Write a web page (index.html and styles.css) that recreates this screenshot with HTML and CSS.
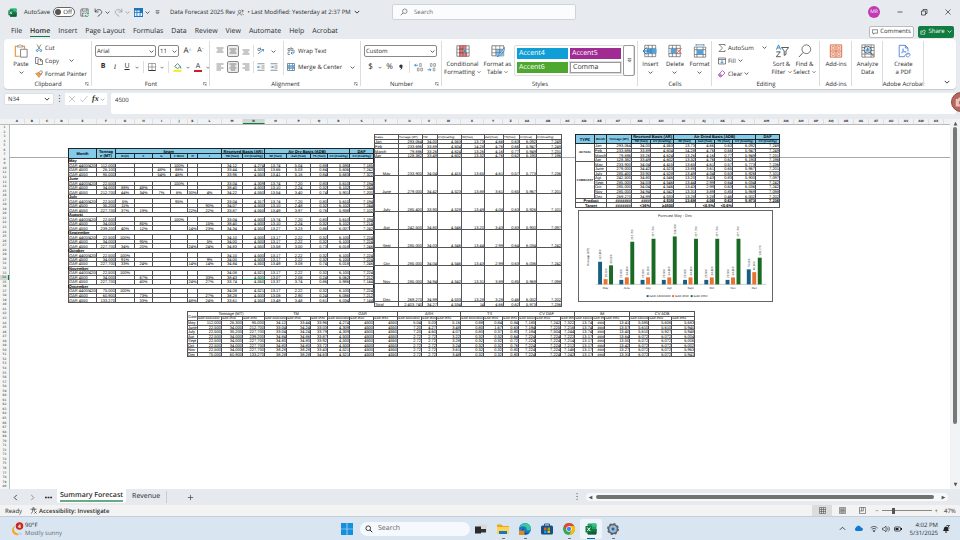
FILE: index.html
```html
<!DOCTYPE html>
<html lang="en">
<head>
<meta charset="utf-8">
<title>Data Forecast 2025 Rev - Excel</title>
<link rel="stylesheet" href="styles.css">
</head>
<body>
<svg class="defs" aria-hidden="true">
  <symbol id="chev" viewBox="0 0 8 8"><path d="M1 2.5 4 5.5 7 2.5" fill="none" stroke="currentColor" stroke-width="1.2"/></symbol>
  <symbol id="launch" viewBox="0 0 10 10"><path d="M1 8V1h8M3.500 3.500 8 8M8 4v4H4" fill="none" stroke="#444" stroke-width="1.200"/></symbol>
  <symbol id="xl" viewBox="0 0 24 24"><rect x="5" y="1" width="18" height="22" rx="2" fill="#21a366"/><path d="M14 1h7a2 2 0 0 1 2 2v4h-9z" fill="#33c481"/><path d="M5 12h18v9a2 2 0 0 1-2 2H7a2 2 0 0 1-2-2z" fill="#185c37"/><path d="M14 12h9v5h-9z" fill="#107c41"/><rect x="1" y="6" width="13" height="13" rx="1" fill="#107c41"/><path d="m4.500 9 6 7m0-7-6 7" stroke="#fff" stroke-width="2"/></symbol>
  <symbol id="search" viewBox="0 0 16 16"><circle cx="9.500" cy="6.500" r="4.500" fill="none" stroke="currentColor" stroke-width="1.300"/><path d="m6 10-4.500 4.500" stroke="currentColor" stroke-width="1.500"/></symbol>
  <symbol id="finder" viewBox="0 0 16 16"><circle cx="6.500" cy="6.500" r="4.700" fill="none" stroke="#222" stroke-width="1.700"/><path d="m10 10 4.500 4.500" stroke="#222" stroke-width="2"/></symbol>
  <symbol id="al-l" viewBox="0 0 16 16"><path d="M1 2h14M1 6h9M1 10h14M1 14h9" stroke="#555" stroke-width="1.300"/></symbol>
  <symbol id="al-c" viewBox="0 0 16 16"><path d="M1 2h14M3.500 6h9M1 10h14M3.500 14h9" stroke="#444" stroke-width="1.300"/></symbol>
  <symbol id="al-r" viewBox="0 0 16 16"><path d="M1 2h14M6 6h9M1 10h14M6 14h9" stroke="#555" stroke-width="1.300"/></symbol>
  <symbol id="v-t" viewBox="0 0 16 16"><path d="M1 2h14M3 6h10M1 10h14" stroke="#555" stroke-width="1.300"/></symbol>
  <symbol id="v-m" viewBox="0 0 16 16"><path d="M1 4h14M3 8h10M1 12h14" stroke="#444" stroke-width="1.300"/></symbol>
  <symbol id="v-b" viewBox="0 0 16 16"><path d="M1 6h14M3 10h10M1 14h14" stroke="#555" stroke-width="1.300"/></symbol>
  <symbol id="in-l" viewBox="0 0 16 16"><path d="M1 1.500h14M9 6h6M9 10h6M1 14.500h14" stroke="#555" stroke-width="1.300"/><path d="M7 8H1m2.500-2.500L1 8l2.500 2.500" fill="none" stroke="#1e7fc2" stroke-width="1.400"/></symbol>
  <symbol id="in-r" viewBox="0 0 16 16"><path d="M1 1.500h14M9 6h6M9 10h6M1 14.500h14" stroke="#555" stroke-width="1.300"/><path d="M1 8h6M4.500 5.500 7 8l-2.500 2.500" fill="none" stroke="#1e7fc2" stroke-width="1.400"/></symbol>
  <symbol id="grid" viewBox="0 0 16 16"><path d="M1 1h14v14H1zM1 5.700h14M1 10.300h14M5.700 1v14M10.300 1v14" fill="none" stroke="#444" stroke-width="1.200"/></symbol>
</svg>

<header class="titlebar">
  <div class="quick">
    <svg class="i9"><use href="#xl"/></svg>
    <label class="autosave">AutoSave <input type="checkbox" aria-label="AutoSave"><span class="toggle"><i></i>Off</span></label>
    <button class="save" aria-label="Save"><svg class="i9" viewBox="0 0 16 16"><path d="M14.500 8V1.500H3L1.500 3v11.500H7M4 1.500v4h8v-4M4.500 14.500V9H8" fill="none" stroke="#555" stroke-width="1.200"/><path d="M9 11a3 3 0 0 1 5.500-1m.500-2v2.500h-2.500M15 13a3 3 0 0 1-5.500 1M9 16v-2.500h2.500" fill="none" stroke="#21a052" stroke-width="1.400"/></svg></button>
    <button aria-label="Undo"><svg class="i9" viewBox="0 0 16 16"><path d="M2 1v6h6M2 7c3-5 8-5 10.500-2.500S14 10 6.500 15" fill="none" stroke="#444" stroke-width="1.500"/></svg></button>
    <svg class="i5"><use href="#chev"/></svg>
    <button class="faded" aria-label="Redo"><svg class="i9" viewBox="0 0 16 16"><path d="M14 1v6H8M14 7C11 2 6 2 3.500 4.500S2 10 9.500 15" fill="none" stroke="#444" stroke-width="1.500"/></svg></button>
    <svg class="i5 faded"><use href="#chev"/></svg>
    <button aria-label="Table"><svg class="i9" viewBox="0 0 16 16"><path d="M0 0h16v16H0z" fill="#1b75bb"/><path d="M1.500 4.500h3v3h-3zM6 4.500h4v3H6zM1.500 9h3v5h-3zM6 9h4v5H6zM11.500 9h3v5h-3z" fill="#e8f3fb"/></svg></button>
    <svg class="i5"><use href="#chev"/></svg>
    <svg class="custom i5" viewBox="0 0 8 8"><path d="M1 1h6M1.500 3.500 4 6.500l2.500-3z" fill="none" stroke="#444"/></svg>
    <span class="doc">Data Forecast 2025 Rev</span>
    <svg class="i7" viewBox="0 0 16 16"><circle cx="6" cy="6" r="3" fill="none" stroke="#444" stroke-width="1.300"/><path d="M1 15c0-6 9-6 9 0M10 2c4 0 4 5 1 6M12 10l3 4M12 4h4" fill="none" stroke="#444" stroke-width="1.300"/></svg>
    <span class="modified">• Last Modified: Yesterday at 2:37 PM</span>
    <svg class="i6"><use href="#chev"/></svg>
  </div>
  <label class="searchbox"><svg class="i8"><use href="#search"/></svg><input type="text" placeholder="Search" aria-label="Search"></label>
  <div class="window">
    <span class="avatar">MR</span>
    <button aria-label="Minimize"><svg class="i8" viewBox="0 0 16 16"><path d="M3 8h10" stroke="#333" stroke-width="1.500"/></svg></button>
    <button aria-label="Restore"><svg class="i8" viewBox="0 0 16 16"><path d="M3 6h8v8H3zM6 6V3h8v8h-3" fill="none" stroke="#333" stroke-width="1.500"/></svg></button>
    <button aria-label="Close"><svg class="i8" viewBox="0 0 16 16"><path d="m3 3 10 10M13 3 3 13" stroke="#333" stroke-width="1.400"/></svg></button>
  </div>
</header>

<nav class="menu">
  <a href="#file">File</a><a href="#home" class="on">Home</a><a href="#insert">Insert</a><a href="#page">Page Layout</a><a href="#formulas">Formulas</a><a href="#data">Data</a><a href="#review">Review</a><a href="#view">View</a><a href="#automate">Automate</a><a href="#help">Help</a><a href="#acrobat">Acrobat</a>
  <button class="comments"><svg class="i6" viewBox="0 0 16 16"><path d="M1 2h14v9H7l-3 3v-3H1z" fill="none" stroke="#333" stroke-width="1.500"/></svg>Comments</button>
  <button class="share"><svg class="i6" viewBox="0 0 16 16"><path d="M7 5H2v9h11v-4M5 10c0-4 3-5 6-5V2l4 4-4 4V8" fill="none" stroke="#fff" stroke-width="1.500"/></svg>Share<svg class="i5"><use href="#chev"/></svg></button>
</nav>

<section class="ribbon" aria-label="Home ribbon">
  <div class="group g-clip">
    <div class="body">
      <button class="big"><svg class="i16" viewBox="0 0 32 32"><path d="M10 5H3v23h10" fill="none" stroke="#e8912d" stroke-width="2.500"/><path d="M18 5h6v6" fill="none" stroke="#e8912d" stroke-width="2.500"/><path d="M8 7V4h3c0-3 6-3 6 0h3v3z" fill="#fff" stroke="#777" stroke-width="1.500"/><path d="M15 12h15v18H15z" fill="#fff" stroke="#666" stroke-width="1.800"/></svg>Paste<svg class="i5"><use href="#chev"/></svg></button>
      <div class="list">
        <button><svg class="i8" viewBox="0 0 16 16"><path d="m4 1 6 10M12 1 6 11" stroke="#555" stroke-width="1.300"/><circle cx="4.500" cy="13" r="2" fill="none" stroke="#1e7fc2" stroke-width="1.500"/><circle cx="11.500" cy="13" r="2" fill="none" stroke="#1e7fc2" stroke-width="1.500"/></svg>Cut</button>
        <button><svg class="i8" viewBox="0 0 16 16"><path d="M6 13H1V1h6M6 4h6l3 3v8H6zM11 4v4h4" fill="none" stroke="#555" stroke-width="1.400"/></svg>Copy<svg class="i5 far"><use href="#chev"/></svg></button>
        <button><svg class="i8" viewBox="0 0 16 16"><path d="m1 7 7 8 4-6-4-4z" fill="#f2a24c" stroke="#c96a1b"/><path d="m8 5 4 4 3-5-3-3z" fill="#fff" stroke="#555" stroke-width="1.400"/></svg>Format Painter</button>
      </div>
    </div>
    <h2>Clipboard</h2><svg class="corner"><use href="#launch"/></svg>
  </div>

  <div class="group g-font">
    <div class="body stack">
      <div class="line">
        <span class="combo c-font"><select aria-label="Font"><option>Arial</option></select><svg class="i5"><use href="#chev"/></svg></span>
        <span class="combo c-size"><select aria-label="Font size"><option>11</option></select><svg class="i5"><use href="#chev"/></svg></span>
        <button class="fa">A<sup>^</sup></button><button class="fa small">A<sup>ˇ</sup></button>
      </div>
      <div class="line fontrow">
        <button class="b">B</button><button class="it">I</button><button class="u">U</button><svg class="i5"><use href="#chev"/></svg><i class="sep"></i>
        <button aria-label="Borders"><svg class="i8" viewBox="0 0 16 16"><path d="M1 1h14v14H1zM1 8h14M8 1v14" fill="none" stroke="#777" stroke-width="1.300"/><path d="M1 15h14" stroke="#333" stroke-width="2"/></svg></button><svg class="i5"><use href="#chev"/></svg><i class="sep"></i>
        <button aria-label="Fill colour"><svg class="i9" viewBox="0 0 16 16"><path d="m3 6 5-5 5 5-5 4zM13 6l1 4" fill="#fff" stroke="#1f7a5c" stroke-width="1.400"/><path d="M1 12h14v4H1z" fill="#f7ec2e"/></svg></button><svg class="i5"><use href="#chev"/></svg>
        <button aria-label="Font colour" class="fcol">A</button><svg class="i5"><use href="#chev"/></svg>
      </div>
    </div>
    <h2>Font</h2><svg class="corner"><use href="#launch"/></svg>
  </div>

  <div class="group g-align">
    <div class="body">
      <div class="alignset">
        <button aria-label="Top align"><svg class="i8"><use href="#v-t"/></svg></button><button class="sel" aria-label="Middle align"><svg class="i8"><use href="#v-m"/></svg></button><button aria-label="Bottom align"><svg class="i8"><use href="#v-b"/></svg></button>
        <button class="bar" aria-label="Orientation"><svg class="i8" viewBox="0 0 16 16"><path d="m2 14 11-9m0 0h-4m4 0v4" fill="none" stroke="#1e7fc2" stroke-width="1.500"/><circle cx="4" cy="5" r="2.500" fill="none" stroke="#555" stroke-width="1.300"/><path d="M7 1v5" stroke="#555" stroke-width="1.300"/></svg></button><svg class="i5"><use href="#chev"/></svg>
        <button aria-label="Align left"><svg class="i8"><use href="#al-l"/></svg></button><button class="sel" aria-label="Centre"><svg class="i8"><use href="#al-c"/></svg></button><button aria-label="Align right"><svg class="i8"><use href="#al-r"/></svg></button>
        <button class="bar" aria-label="Decrease indent"><svg class="i8"><use href="#in-l"/></svg></button><button aria-label="Increase indent"><svg class="i8"><use href="#in-r"/></svg></button>
      </div>
      <div class="wraps">
        <button><svg class="i8" viewBox="0 0 16 16"><path d="M2 3h4v4H2zM8 0v7h4V3H8M6 10H2v5h4" fill="none" stroke="#555" stroke-width="1.200"/><path d="M14 6v6H8m2.500-2.500L8 12l2.500 2.500" fill="none" stroke="#1e7fc2" stroke-width="1.500"/></svg>Wrap Text</button>
        <button><svg class="i8" viewBox="0 0 16 16"><path d="M1 1h14v14H1z" fill="#fff" stroke="#555" stroke-width="1.300"/><path d="M1 5h14v6H1z" fill="#a9d5f2" stroke="#1e7fc2"/><path d="M3 8h10M5 6 3 8l2 2M11 6l2 2-2 2M5 1v4M11 1v4M5 11v4M11 11v4" fill="none" stroke="#14588c"/></svg>Merge &amp; Center<svg class="i5 far"><use href="#chev"/></svg></button>
      </div>
    </div>
    <h2>Alignment</h2><svg class="corner"><use href="#launch"/></svg>
  </div>

  <div class="group g-num">
    <div class="body stack">
      <div class="line"><span class="combo c-num"><select aria-label="Number format"><option>Custom</option></select><svg class="i5"><use href="#chev"/></svg></span></div>
      <div class="line numrow">
        <button class="sym">$</button><svg class="i5"><use href="#chev"/></svg><button class="sym">%</button><button aria-label="Comma style"><svg class="i8" viewBox="0 0 16 16"><path d="M8 3a3 3 0 0 1 3 4c0 3-2 6-5 7 2-2 2-3 2-4a3 3 0 0 1 0-7z" fill="#333"/></svg></button><i class="sep"></i>
        <button aria-label="Increase decimal"><svg class="i9" viewBox="0 0 16 16"><path d="M7 4H1m2.500-2.500L1 4l2.500 2.500" fill="none" stroke="#1e7fc2" stroke-width="1.400"/><path d="M10 1h3v5h-3zM6 9h3v5H6zM12 9h3v5h-3z" fill="none" stroke="#666"/></svg></button>
        <button aria-label="Decrease decimal"><svg class="i9" viewBox="0 0 16 16"><path d="M1 12h6M4.500 9.500 7 12l-2.500 2.500" fill="none" stroke="#1e7fc2" stroke-width="1.400"/><path d="M6 1h3v5H6zM12 1h3v5h-3zM11 9h3v5h-3z" fill="none" stroke="#666"/></svg></button>
      </div>
    </div>
    <h2>Number</h2><svg class="corner"><use href="#launch"/></svg>
  </div>

  <div class="group g-style">
    <div class="body">
      <button class="big"><svg class="i16" viewBox="0 0 32 32"><path d="M2 4h28v24H2z" fill="#fff" stroke="#555" stroke-width="1.600"/><path d="M8 4h14v7H8zM8 11h8v9H8zM8 20h17v8H8z" fill="#f07a7a" stroke="#c33"/><path d="M2 12h28M2 20h28M9 4v24M16 4v24M23 4v24" stroke="#555" stroke-width="1.200"/><path d="M17 13h6v6h-6z" fill="#3b8fd0"/></svg>Conditional<span>Formatting <svg class="i4"><use href="#chev"/></svg></span></button>
      <button class="big"><svg class="i16" viewBox="0 0 32 32"><path d="M2 4h27v23H2z" fill="#fff" stroke="#555" stroke-width="1.600"/><path d="M11 12h18v15H11z" fill="#8cc4ee"/><path d="M2 12h27M2 20h27M11 4v23M20 4v23" stroke="#555" stroke-width="1.300"/><path d="m31 8-12 15-5 6 7-3L32 12z" fill="#d7ebfa" stroke="#1b75bb" stroke-width="1.700"/></svg>Format as<span>Table <svg class="i4"><use href="#chev"/></svg></span></button>
      <div class="gallery">
        <button class="a4">Accent4</button><button class="a5">Accent5</button><button class="a6">Accent6</button><button class="cm">Comma</button>
        <button class="more" aria-label="More styles"><svg class="i5" viewBox="0 0 8 8"><path d="M1 1h6M1.500 3.500 4 6.500l2.500-3z" fill="none" stroke="#444"/></svg></button>
      </div>
    </div>
    <h2>Styles</h2>
  </div>

  <div class="group g-cells">
    <div class="body even">
      <button class="big"><svg class="i16" viewBox="0 0 32 32"><path d="M4 3h25v26H4zM4 10h25M4 22h25M12 3v26M21 3v26" fill="none" stroke="#555" stroke-width="1.500"/><path d="M8 11h23v10H8z" fill="#4da3df"/><path d="M8 8 0 16l8 8M0 16h14M18 11v10" stroke="#1b75bb" stroke-width="2" fill="none"/></svg>Insert<svg class="i5"><use href="#chev"/></svg></button>
      <button class="big"><svg class="i16" viewBox="0 0 32 32"><path d="M2 3h26v26H2zM2 10h26M2 22h26M10 3v26M19 3v26" fill="none" stroke="#555" stroke-width="1.500"/><path d="M6 11h13v10H6z" fill="#4da3df"/><path d="m18 10 13 13M31 10 18 23" stroke="#e0474c" stroke-width="2"/></svg>Delete<svg class="i5"><use href="#chev"/></svg></button>
      <button class="big"><svg class="i16" viewBox="0 0 32 32"><path d="M3 7h26v23H3zM3 13h26M3 24h26M9 7v23M23 7v23" fill="none" stroke="#555" stroke-width="1.500"/><path d="M9 13h14v11H9z" fill="#4da3df"/><path d="M7 2h18M7 0v4M25 0v4" stroke="#1b75bb" stroke-width="1.600"/></svg>Format<svg class="i5"><use href="#chev"/></svg></button>
    </div>
    <h2>Cells</h2>
  </div>

  <div class="group g-edit">
    <div class="body">
      <div class="list">
        <button><svg class="i8" viewBox="0 0 16 16"><path d="M14 4V1H2l7 7-7 7h12v-3" fill="none" stroke="#444" stroke-width="1.300"/></svg>AutoSum<svg class="i5 far"><use href="#chev"/></svg></button>
        <button><svg class="i8" viewBox="0 0 16 16"><path d="M1 2h14v12H1zM1 5h14" fill="none" stroke="#555" stroke-width="1.400"/><path d="M8 6v6M5 9.500 8 12.500l3-3" fill="none" stroke="#1e7fc2" stroke-width="1.600"/></svg>Fill<svg class="i5"><use href="#chev"/></svg></button>
        <button><svg class="i8" viewBox="0 0 16 16"><path d="m1 9 8-8 5 5-8 8H4l-3-3z" fill="#fff" stroke="#a33fb5" stroke-width="1.500"/><path d="m1 9 3-3 5 5-3 3H4l-3-3z" fill="#c77bd4"/></svg>Clear<svg class="i5"><use href="#chev"/></svg></button>
      </div>
      <button class="big"><svg class="i16" viewBox="0 0 32 32"><path d="M3 13 8 2l5 11M5 9h6" fill="none" stroke="#1e7fc2" stroke-width="2"/><path d="M3 18h9L3 29h10" fill="none" stroke="#444" stroke-width="2"/><path d="M15 8h16l-6 8v8l-4 2V16z" fill="none" stroke="#444" stroke-width="2"/></svg>Sort &amp;<span>Filter <svg class="i4"><use href="#chev"/></svg></span></button>
      <button class="big"><svg class="i16" viewBox="0 0 32 32"><circle cx="19" cy="12" r="10" fill="none" stroke="#555" stroke-width="1.800"/><path d="M12 19 2 30" stroke="#555" stroke-width="2"/></svg>Find &amp;<span>Select <svg class="i4"><use href="#chev"/></svg></span></button>
    </div>
    <h2>Editing</h2>
  </div>

  <div class="group g-add">
    <div class="body even"><button class="big"><svg class="i16" viewBox="0 0 32 32"><path d="M3 2h26v28H3zM16 2v28M3 16h26" fill="#fbe3da" stroke="#d8663c" stroke-width="2"/><path d="M7 6h5v6H7zM20 6h5v6h-5zM7 20h5v6H7zM20 20h5v6h-5z" fill="#fff" stroke="#d8663c" stroke-width="1.500"/></svg>Add-ins</button></div>
    <h2>Add-ins</h2>
  </div>
  <div class="group g-ana">
    <div class="body even"><button class="big"><svg class="i16" viewBox="0 0 32 32"><path d="M2 2h28v28H2zM2 8h28M2 15h28M2 23h28M9 2v28M23 2v28" fill="none" stroke="#555" stroke-width="1.500"/><circle cx="15" cy="13" r="8" fill="#d9ecf8" stroke="#444" stroke-width="1.700"/><path d="M12 17v-5M15 17V8M18 17v-7" stroke="#1e7fc2" stroke-width="2"/><path d="m21 19 8 9" stroke="#444" stroke-width="2"/></svg>Analyze<span>Data</span></button></div>
  </div>
  <div class="group g-pdf">
    <div class="body even"><button class="big"><svg class="i16" viewBox="0 0 32 32"><path d="M16 29H5V3h14l6 6v8M19 3v6h6" fill="none" stroke="#4a7fdc" stroke-width="2"/><path d="M10 20c5-3 5-8 4-9s-2 2 1 5 6 3 6 2-6-1-11 2z" fill="none" stroke="#4a7fdc" stroke-width="1.500"/><path d="M17 30c0-6 9-12 12-8s-3 9-7 7 1-9 6-6" fill="none" stroke="#4a7fdc" stroke-width="1.800"/></svg>Create<span>a PDF</span></button></div>
    <h2>Adobe Acrobat</h2>
  </div>
  <button class="collapse" aria-label="Collapse ribbon"><svg class="i6"><use href="#chev"/></svg></button>
</section>

<section class="formula">
  <label class="namebox"><input type="text" value="N34" aria-label="Name box"><svg class="i6"><use href="#chev"/></svg></label>
  <span class="dots">⋮</span>
  <div class="fx">
    <button aria-label="Cancel"><svg class="i8" viewBox="0 0 16 16"><path d="m2 2 12 12M14 2 2 14" stroke="#aaa" stroke-width="1.300"/></svg></button>
    <button aria-label="Enter"><svg class="i8" viewBox="0 0 16 16"><path d="m1 9 4 5L15 2" fill="none" stroke="#aaa" stroke-width="1.300"/></svg></button>
    <button class="fxb">fx</button><svg class="i5 faded"><use href="#chev"/></svg>
  </div>
  <input class="value" type="text" value="4500" aria-label="Formula bar">
</section>

<main class="sheet">
  <div class="cols" id="cols"></div>
  <div class="rows" id="rows"></div>
  <div class="canvas">
    <div class="upper">
      <table class="data t-month" id="tMonth"></table>
      <table class="data t-totals" id="tTotals"></table>
      <div class="side">
        <table class="data t-type" id="tType"></table>
        <svg class="chart" id="chart" viewBox="0 0 195 92" role="img" aria-label="Forecast May - Dec"></svg>
      </div>
    </div>
    <table class="data t-detail" id="tDetail"></table>
  </div>
  <div class="vscroll"><svg viewBox="0 0 8 8"><path d="M1 7 4 1l3 6z" fill="#555"/></svg><i></i><b></b><svg viewBox="0 0 8 8"><path d="M1 1l3 6 3-6z" fill="#555"/></svg></div>
  <span class="camera"><svg class="i12" viewBox="0 0 16 16"><path d="M1 4h3l1-2h5l1 2h4v10H1z" fill="#e9c3bf"/><circle cx="8" cy="9" r="3" fill="#b9665f"/></svg></span>
</main>

<nav class="sheets">
  <button aria-label="Previous sheet"><svg class="i7" viewBox="0 0 8 8"><path d="M5.500 1 2.500 4l3 3" fill="none" stroke="#333"/></svg></button>
  <button aria-label="Next sheet"><svg class="i7" viewBox="0 0 8 8"><path d="m2.500 1 3 3-3 3" fill="none" stroke="#888"/></svg></button>
  <button class="ell" aria-label="More sheets"><svg class="i7" viewBox="0 0 8 8"><path d="M0 4h2M3 4h2M6 4h2" stroke="#222" stroke-width="1.500"/></svg></button>
  <a href="#summary" class="tab on"><span>Summary Forecast</span></a>
  <a href="#revenue" class="tab">Revenue</a>
  <button class="plus" aria-label="New sheet"><svg class="i7" viewBox="0 0 8 8"><path d="M4 1v6M1 4h6" stroke="#444" stroke-width=".8"/></svg></button>
  <span class="dots">⋮</span>
  <div class="hscroll"><svg viewBox="0 0 8 8"><path d="M7 1 1 4l6 3z" fill="#555"/></svg><i></i><svg viewBox="0 0 8 8"><path d="M1 1l6 3-6 3z" fill="#555"/></svg></div>
</nav>

<footer class="status">
  <span>Ready</span>
  <button class="acc"><svg class="i7" viewBox="0 0 16 16"><circle cx="8" cy="2.500" r="1.800" fill="none" stroke="#333" stroke-width="1.300"/><path d="M1 5h14M6 5v5l-3 5M10 5v4M10 10l5 5M15 10l-5 5" fill="none" stroke="#333" stroke-width="1.500"/></svg>Accessibility: Investigate</button>
  <div class="views">
    <button class="cur" aria-label="Normal"><svg class="i7"><use href="#grid"/></svg></button>
    <button aria-label="Page layout"><svg class="i7" viewBox="0 0 16 16"><path d="M1 1h14v14H1zM4 3h8v10H4zM4 6h8M4 8h8M4 10h8" fill="none" stroke="#444" stroke-width="1.200"/></svg></button>
    <button aria-label="Page break"><svg class="i7" viewBox="0 0 16 16"><path d="M1 1h14v14H1zM1 9h9V1M6 1v8" fill="none" stroke="#444" stroke-width="1.300"/></svg></button>
  </div>
  <div class="zoom"><span>−</span><input type="range" min="0" max="200" value="46" aria-label="Zoom"><span>+</span><output>47%</output></div>
</footer>

<footer class="taskbar">
  <button class="weather"><svg class="i14" viewBox="0 0 28 28"><path d="M11 7a10 10 0 1 0 12 14 9 9 0 0 1-12-14z" fill="#f5a623"/><path d="M16 25c-2-4 4-6 5-3 4-1 5 4 1 4h-5z" fill="#c3d5ee"/><circle cx="19" cy="8" r="7.500" fill="#c42b1c"/><text x="19" y="12" font-size="10" font-weight="700" text-anchor="middle" fill="#fff">4</text></svg><span>90°F<small>Mostly sunny</small></span></button>
  <div class="apps">
    <button aria-label="Start"><svg class="i12" viewBox="0 0 24 24"><path d="M0 0h11.300v11.300H0zM12.700 0H24v11.300H12.700zM0 12.700h11.300V24H0zM12.700 12.700H24V24H12.700z" fill="#1490df"/></svg></button>
    <label class="tsearch"><svg class="i8"><use href="#finder"/></svg><input type="text" placeholder="Search" aria-label="Taskbar search"></label>
    <button aria-label="Task view"><svg class="i12" viewBox="0 0 24 24"><path d="M7 3h17v15H7z" fill="#d9d9d9"/><path d="M0 7h12v14H0z" fill="#2a2a2a"/><path d="M12 12h10v7H12z" fill="#333"/></svg></button>
    <button class="run" aria-label="File Explorer"><svg class="i12" viewBox="0 0 24 24"><path d="M0 3h9l3 3h12v16H0z" fill="#e9a820"/><path d="M0 8h24v14H0z" fill="#fcd354"/><path d="M4 16h16v6H4z" fill="#1976b8"/></svg></button>
    <button class="run" aria-label="Edge"><svg class="i12" viewBox="0 0 24 24"><circle cx="12" cy="12" r="12" fill="#1779c9"/><path d="M1 9C4-3 23-2 24 10c0 6-8 6-9 3 2-5-7-9-14-4z" fill="#3cc9a0"/><path d="M10 11c-3 5 3 11 10 8-5 7-18 4-13-7z" fill="#0c4fa0"/><path d="M0 15h11v9H0z" fill="#d88a27"/></svg></button>
    <button aria-label="Store"><svg class="i12" viewBox="0 0 24 24"><path d="M7 6V2h10v4" fill="none" stroke="#1d5fa5" stroke-width="2"/><rect x="0" y="5" width="24" height="18" rx="3" fill="#174f86"/><path d="M6 9h5v5H6z" fill="#f25022"/><path d="M13 9h5v5h-5z" fill="#7fba00"/><path d="M6 15h5v5H6z" fill="#00a4ef"/><path d="M13 15h5v5h-5z" fill="#ffb900"/></svg></button>
    <button class="run" aria-label="Chrome"><svg class="i12" viewBox="0 0 24 24"><circle cx="12" cy="12" r="12" fill="#34a853"/><path d="M1.600 6A12 12 0 0 1 22.400 6H12l-5 9z" fill="#ea4335"/><path d="M22.400 6A12 12 0 0 1 12 24l5.200-9L12 6z" fill="#fbbc05"/><circle cx="12" cy="12" r="5.500" fill="#fff"/><circle cx="12" cy="12" r="4.300" fill="#4285f4"/></svg></button>
    <button class="run active" aria-label="Excel"><svg class="i12"><use href="#xl"/></svg></button>
    <button class="run" aria-label="Settings"><svg class="i12" viewBox="0 0 24 24"><circle cx="12" cy="12" r="9" fill="#9db4c9" stroke="#58636e" stroke-width="3"/><circle cx="12" cy="12" r="10.500" fill="none" stroke="#58636e" stroke-width="3" stroke-dasharray="4.200 4"/><circle cx="12" cy="12" r="4" fill="#1268b8" stroke="#eee"/></svg></button>
  </div>
  <div class="tray">
    <svg class="i7" viewBox="0 0 8 8"><path d="m1 5.500 3-3 3 3" fill="none" stroke="#333"/></svg>
    <svg class="i9" viewBox="0 0 18 18"><path d="M4 14a4 4 0 0 1 0-7c2-5 9-4 10 0 5 0 5 7 0 7z" fill="#0f7ad6"/></svg>
    <svg class="i8" viewBox="0 0 16 16"><path d="M1 6c4-4 10-4 14 0M3.500 9c3-3 6-3 9 0M6 11.500c1.500-1 2.500-1 4 0L8 14z" fill="none" stroke="#333" stroke-width="1.500"/></svg>
    <svg class="i8" viewBox="0 0 16 16"><path d="M1 6h3l4-4v12l-4-4H1zM10 5c2 2 2 4 0 6M12.500 3c3 3 3 7 0 10" fill="none" stroke="#333" stroke-width="1.300"/></svg>
    <svg class="i8" viewBox="0 0 16 16"><rect x="1" y="4" width="12" height="8" rx="2" fill="none" stroke="#222" stroke-width="1.500"/><path d="M3 6h6v4H3zM14 6h2v4h-2z" fill="#222"/></svg>
    <time>4:02 PM<br>5/31/2025</time>
    <svg class="i8 bell" viewBox="0 0 16 16"><path d="M2 12c2-2 1-9 6-9 5 1 4 7 6 9zM6 13h4v2H6z" fill="#222"/><path d="M9 1h6l-5 5h5" fill="none" stroke="#222" stroke-width="1.600"/></svg>
  </div>
</footer>
<script src="script.js"></script>
</body>
</html>
```
FILE: styles.css
```css
* { box-sizing: border-box; }
body {
  margin: 0; height: 100vh; display: flex; flex-direction: column; overflow: hidden;
  background: #e7ebef; color: #2b2b2b;
  font: 6px/8px "Open Sans", "Noto Sans", sans-serif;
  text-rendering: geometricPrecision;
}
button, input, select { font: inherit; color: inherit; border: 0; background: none; padding: 0; margin: 0; outline: 0; text-rendering: inherit; }
button { display: inline-flex; align-items: center; justify-content: center; white-space: nowrap; }
a { color: inherit; text-decoration: none; }
svg { flex: none; display: block; }
.defs { display: none; }
.i4 { width: 4px; height: 4px; }
.i5 { width: 5px; height: 5px; }
.i6 { width: 6px; height: 6px; }
.i7 { width: 7px; height: 7px; }
.i8 { width: 8px; height: 8px; }
.i9 { width: 9px; height: 9px; }
.i12 { width: 12px; height: 12px; }
.i14 { width: 14px; height: 14px; }
.i16 { width: 14px; height: 14px; }
.faded { opacity: .45; }

.titlebar { flex: none; height: 24px; display: grid; grid-template-columns: 392px 184px 1fr; align-items: center; }
.quick { display: flex; align-items: center; padding-left: 8px; white-space: nowrap; }
.autosave { display: flex; align-items: center; gap: 3px; margin-left: 7px; width: 56px; }
.autosave input { position: absolute; opacity: 0; width: 1px; height: 1px; }
.toggle { display: flex; align-items: center; gap: 2px; width: 22px; height: 10px; border: 1px solid #666; border-radius: 5px; background: #fff; padding-left: 1px; }
.toggle i { width: 6px; height: 6px; border-radius: 50%; background: #555; }
.quick .i5 { margin: 0 4px 0 2px; }
.save { margin-right: 5px; }
.quick .custom { margin: 0 10px 0 1px; }
.doc { margin-right: 2px; }
.modified { margin: 0 3px; }
.searchbox { height: 16px; display: flex; align-items: center; gap: 6px; padding: 0 7px; background: #fbfcfd; border: 1px solid #cfd3d8; border-radius: 2px; color: #555; }
.searchbox input { flex: 1; min-width: 0; }
input::placeholder { color: #666; opacity: 1; }
.window { display: flex; justify-content: flex-end; align-items: center; gap: 16px; padding-right: 8px; }
.avatar { width: 12px; height: 12px; border-radius: 50%; background: #c239b3; color: #fff; font-size: 5px; line-height: 12px; text-align: center; }

.menu { flex: none; height: 15px; display: flex; align-items: center; gap: 8px; padding: 0 6px 0 11px; font-size: 7px; line-height: 9px; white-space: nowrap; }
.menu .on { font-weight: 600; border-bottom: 1px solid #107c41; }
.menu button { height: 12px; gap: 2px; border-radius: 2px; font-size: 6px; }
.menu .comments { margin-left: auto; width: 45px; background: #fff; border: 1px solid #bbb; }
.menu .share { width: 36px; background: #107c41; color: #fff; margin-left: -4px; }

.ribbon { flex: none; height: 50px; margin: 0 4px; display: flex; background: #fff; border-radius: 4px; box-shadow: 0 1px 1px #c3c8ce; }
.group { position: relative; display: flex; flex-direction: column; padding-top: 2px; }
.group::after { content: ""; position: absolute; right: 0; top: 2px; bottom: 3px; width: 1px; background: #dcdcdc; }
.group h2 { margin: 0 -2px; font: inherit; text-align: center; height: 9px; white-space: nowrap; }
.body { flex: 1; display: flex; align-items: flex-start; }
.corner { position: absolute; right: 3px; bottom: 3px; width: 4px; height: 4px; }
.g-clip { width: 88px; } .g-font { width: 118px; } .g-align { width: 151px; } .g-num { width: 81px; }
.g-style { width: 196px; } .g-cells { width: 74px; } .g-edit { width: 108px; } .g-add { width: 32px; }
.g-ana { width: 31px; } .g-pdf { width: 41px; }
.big { flex-direction: column; width: 22px; padding-top: 3px; }
.big > .i16 { margin-bottom: 2px; }
.big .i5 { margin-top: 2px; }
.big span { display: flex; align-items: center; gap: 2px; }
.g-clip .big { width: 24px; margin: 0 2px 0 5px; }
.list { display: flex; flex-direction: column; }
.list button { height: 13px; justify-content: flex-start; gap: 2px; }
.g-clip .far { margin-left: 8px; }
.even { justify-content: space-around; }
.stack { flex-direction: column; padding: 2px 0 0 3px; }
.line { display: flex; align-items: center; height: 16px; }
.combo { position: relative; display: flex; height: 12px; border: 1px solid #888; border-radius: 2px; margin-right: 2px; }
.combo select { flex: 1; min-width: 0; appearance: none; padding-left: 1px; }
.combo svg { position: absolute; right: 1px; top: 3px; pointer-events: none; }
.c-font { width: 61px; } .c-size { width: 21px; } .c-num { width: 73px; }
.fa { width: 13px; font-size: 8px; } .fa sup { font-size: 5px; line-height: 4px; color: #1e7fc2; }
.fa.small { font-size: 7px; }
.fontrow { gap: 4px; padding-left: 4px; }
.fontrow button { min-width: 8px; font-size: 7px; }
.b { font-weight: 700; } .it { font-style: italic; font-family: "Liberation Serif", serif; } .u { text-decoration: underline; }
.fontrow .fcol { line-height: 7px; border-bottom: 2px solid #c8202a; }
.fontrow .i5, .numrow .i5 { width: 4px; }
.sep { width: 1px; height: 12px; background: #ddd; }
.alignset { display: grid; grid-template-columns: 13px 13px 13px 15px 13px; grid-auto-rows: 16px; align-items: center; justify-items: center; padding: 2px 0 0 3px; width: 74px; border-right: 1px solid #ddd; }
.alignset button { width: 12px; height: 12px; }
.alignset .bar { border-left: 1px solid #ddd; padding-left: 2px; width: 14px; }
.sel.sel { background: #ededed; border: 1px solid #888; border-radius: 2px; }
.wraps { display: flex; flex-direction: column; padding: 2px 0 0 3px; }
.wraps button { height: 16px; justify-content: flex-start; gap: 3px; }
.wraps .far { margin-left: 5px; }
.numrow { gap: 4px; padding-left: 3px; }
.sym { font-size: 8px; } .numrow .sym { width: 7px; }
.g-style .big { width: 35px; }
.g-style .body { padding-left: 3px; }
.gallery { display: grid; grid-template-columns: 51px 51px 12px; grid-template-rows: 11px 11px; gap: 3px 2px; width: 120px; height: 31px; padding: 2px 0 0 2px; margin: 4px 0 0 -1px; border: 1px solid #ddd; border-radius: 2px; }
.gallery button { justify-content: flex-start; padding-left: 2px; color: #fff; font-size: 7px; }
.gallery .a4 { background: #0f9ed5; } .gallery .a5 { background: #a02b93; } .gallery .a6 { background: #4ea72e; }
.gallery .cm { color: #333; border: 1px solid #999; outline: 1px solid #ddd; }
.gallery .more { grid-column: 3; grid-row: 1 / 3; margin: -3px 0; width: 12px; height: 31px; padding: 0; justify-content: center; border: 1px solid #999; border-radius: 2px; }
.g-edit .body { padding-left: 6px; }
.g-edit .list { width: 52px; }
.g-edit .far { margin-left: 6px; }
.g-edit .big { width: 23px; }
.collapse { margin: auto 6px 4px auto; }

.formula { flex: none; display: grid; grid-template-columns: 50px 11px 42px 1fr; height: 30px; padding: 4px; align-items: start; }
.namebox { display: flex; align-items: center; height: 12px; background: #fff; border: 1px solid #dcdfe3; border-radius: 2px; padding: 0 3px; }
.namebox input { flex: 1; min-width: 0; }
.dots { line-height: 12px; text-align: center; font-size: 8px; }
.fx { display: flex; align-items: center; gap: 4px; background: #fff; height: 12px; padding-left: 3px; }
.fx .i5 { margin-left: -3px; }
.fxb { font: italic 700 8px/8px "Liberation Serif", serif; }
.value { background: #fff; height: 21px; margin-left: 4px; padding: 1px 4px 9px; border-radius: 2px; }

.sheet { flex: 1; min-height: 0; position: relative; display: grid; grid-template-columns: 10px 1fr 10px; grid-template-rows: 6px 1fr; background: #fff; }
.cols { grid-column: 1 / 3; display: flex; padding-left: 10px; background: #f1f2f3; border-bottom: 1px solid #bbb; overflow: hidden; font: 700 3px/5px "DejaVu Sans", sans-serif; }
.cols span { flex: none; text-align: center; border-right: 1px solid #dfdfdf; }
.cols .on { background: #cfd9d3; border-bottom: 1px solid #107c41; }
.rows { grid-column: 1; grid-row: 2; display: flex; flex-direction: column; border-right: 1px solid #bbb; background: #f4f5f5; font: 3px/4px "DejaVu Sans", sans-serif; text-align: center; overflow: hidden; }
.rows span { flex: 1; min-height: 0; }
.rows .on { background: #cfd9d3; border-right: 1px solid #107c41; }
.canvas { grid-column: 2; grid-row: 2; padding: 9px 0 0 58px; background: linear-gradient(#aaa, #aaa) 0 32px / 100% 1px no-repeat; overflow: hidden; }
.upper { display: flex; align-items: flex-start; }

.data { flex: none; border-collapse: collapse; table-layout: fixed; font: 4px/3px "Liberation Sans", sans-serif; color: #000; background: #fff; }
.data th, .data td { padding: 0; border: 1px solid #555; white-space: nowrap; overflow: hidden; font-weight: inherit; }
.data td { text-align: right; }
.data .l { text-align: left; }
.data .c { text-align: center; }
.data .h th { background: #83cbeb; font-weight: 700; border-color: #222; }
.data .sub th, .data .sub td, .data .h .narrow { font-size: 3px; }
.data .h .two { font-size: 4px; line-height: 4px; }
.t-month { height: 155px; margin-top: 14px; border: 1px solid #222; }
.t-month .m td { border-width: 0; border-top: 1px solid #555; font-weight: 700; }
.t-month .sel.sel { background: #fff; border: 1px solid #107c41; border-radius: 0; }
.t-totals { height: 173px; }
.t-totals td { vertical-align: bottom; }
.side { margin-left: 13px; }
.t-type { height: 74px; border: 1px solid #000; }
.t-type .bold td, .t-type .cat { font-weight: 700; }
.t-type .cat { font-size: 3px; }
.chart { display: block; width: 195px; height: 92px; margin: 2px 0 0 3px; background: #fff; border: 1px solid #666; font-family: "Liberation Sans", sans-serif; }
.chart .ct { font-size: 4px; text-anchor: middle; fill: #333; }
.chart .cl { font-size: 3px; text-anchor: middle; fill: #333; }
.chart .cv { font-size: 3px; fill: #333; }
.chart .cg { font-size: 3px; fill: #333; }
.s0 { fill: #156082; } .s1 { fill: #e97132; } .s2 { fill: #196b24; }
.t-detail { height: 46px; margin: 4px 0 0 119px; }

.vscroll { grid-column: 3; grid-row: 1 / 3; display: flex; flex-direction: column; align-items: center; background: #f2f3f4; padding: 2px 0; }
.vscroll svg { width: 5px; height: 5px; }
.vscroll i { flex: 298; width: 4px; border-radius: 2px; background: #757a77; margin-top: 1px; }
.vscroll b { flex: 58; }
.camera { position: absolute; right: -11px; top: -27px; width: 20px; height: 20px; border-radius: 50%; background: #b9665f; border: 1px solid #8d4a45; display: flex; align-items: center; padding-left: 3px; }

.sheets { flex: none; height: 16px; display: flex; align-items: center; background: #e6e9ee; padding-left: 11px; font-size: 7px; }
.sheets > button { width: 9px; margin-right: 8px; }
.sheets > .ell { margin-right: 4px; margin-left: -1px; }
.tab { display: flex; align-items: center; height: 12px; padding: 0 8px; border-right: 1px solid #ccc; white-space: nowrap; }
.tab.on { background: #fff; height: 14px; margin-bottom: 2px; padding: 0 3px; border: 0; border-radius: 0 0 2px 2px; }
.tab.on span { border-bottom: 2px solid #6aab87; line-height: 9px; font-size: 7px; font-weight: 600; }
.tab + .tab { padding: 0 6px; }
.sheets > .plus { margin-left: 19px; }
.sheets .dots { margin-left: auto; width: 18px; }
.hscroll { display: flex; align-items: center; width: 362px; height: 8px; padding: 0 2px; gap: 3px; border-radius: 4px; background: #f7f8f9; margin-right: 12px; }
.hscroll svg { width: 5px; height: 5px; }
.hscroll i { flex: 1; height: 4px; border-radius: 2px; background: #6f7371; margin-right: 4px; }

.status { flex: none; height: 11px; display: flex; align-items: center; background: #f3f3f3; padding: 0 4px 0 5px; }
.acc { margin-left: 8px; gap: 2px; font-weight: 600; }
.views { display: flex; margin-left: auto; }
.views button { width: 20px; height: 11px; }
.views .cur { background: #dcdcdc; }
.zoom { display: flex; align-items: center; gap: 3px; margin-left: 3px; }
.zoom input { appearance: none; width: 50px; height: 5px; background: linear-gradient(#888, #888) 0 50% / 100% 1px no-repeat; }
.zoom input::-webkit-slider-thumb { appearance: none; width: 3px; height: 6px; background: #555; }
.zoom output { margin-left: 3px; width: 12px; }

.taskbar { flex: none; height: 24px; display: grid; grid-template-columns: 341px 1fr auto; align-items: center; background: #d9e5f1; border-top: 1px solid #c5cfda; }
.weather { justify-self: start; margin-left: 10px; gap: 1px; text-align: left; }
.weather small { display: block; font-size: 6px; color: #666; }
.apps { display: flex; align-items: center; height: 20px; }
.apps button { position: relative; width: 22px; height: 20px; }
.apps > button:first-child { width: 12px; margin-right: 7px; }
.tsearch { display: flex; align-items: center; gap: 5px; width: 110px; height: 14px; padding: 0 5px; background: #f5f8fc; border-radius: 7px; font-size: 7px; }
.tsearch input { flex: 1; min-width: 0; }
.run::after { content: ""; position: absolute; bottom: 0; width: 3px; height: 1px; background: #777; }
.active { background: #eef4fa; border-radius: 2px; }
.active::after { width: 8px; background: #0067c0; }
.tray { display: flex; align-items: center; gap: 4px; padding-right: 10px; }
.tray time { text-align: right; margin-left: 4px; }
.tray .i7 { margin-right: 4px; }
.tray .i9 { margin-right: 3px; }
```
FILE: script.js
```js
const $ = id => document.getElementById(id);
const colgroup = w => '<colgroup>' + w.map(n => `<col style="width:${n}px">`).join('') + '</colgroup>';
const cells = (s, left = 0) => s.split('|').map((v, i) => `<td${i < left ? ' class="l"' : ''}>${v}</td>`).join('');
const size = (t, w) => { t.style.width = w.reduce((a, b) => a + b, 0) + 'px'; };

/* Column and row headings */
const sheetCols = [15,15,15,14,28,19,19,18,18,17,10,24,21,22,22,24,17,22,24,24,24,15,24,23,19,16,17,25,14,19,12,25,19,23,22,19,18,23,24,15,15,15,15,15,15,15,15,15,15,15];
const letter = i => (i > 25 ? 'A' : '') + String.fromCharCode(65 + i % 26);
$('cols').innerHTML = sheetCols.map((w, i) => `<span style="width:${w}px"${i === 13 ? ' class="on"' : ''}>${letter(i)}</span>`).join('');
$('rows').innerHTML = Array.from({ length: 80 }, (_, i) => `<span${i === 33 ? ' class="on"' : ''}>${i + 1}</span>`).join('');

/* Monthly blend */
const wMonth = [28,19,19,18,18,17,10,24,21,22,22,24,17,22,24];
const products = ['GAR 4400/4200', 'GAR 4500', 'GAR 4550'];
const months = [
  ['May', '112,000||||100%|||34.12|4,274|13.74|5.04|0.88|5,595|7,185', '26,100|||48%|88%|||33.44|4,500|13.66|5.03|0.84|5,606|7,242', '95,000|||54%|46%|||33.96|4,550|13.41|5.16|0.84|5,683|7,322'],
  ['June', '22,500||||100%|||33.04|4,309|13.74|7.20|0.80|5,610|7,194', '34,000|88%|48%|||||38.40|4,500|13.10|2.24|0.32|6,102|7,244', '212,700|44%|34%|7%|6%|30%|4%|34.22|4,550|13.54|3.40|0.74|5,901|7,200'],
  ['July', '22,500|5%|||95%|||33.04|4,317|13.74|7.20|0.80|5,610|7,194', '35,200|11%|||||90%|34.07|4,500|13.10|2.48|0.32|6,102|7,244', '227,700|37%|19%|||22%|22%|33.87|4,550|13.49|3.97|0.76|5,938|7,102'],
  ['August', '22,500||||100%|||33.04|4,500|13.74|7.20|0.80|5,610|7,194', '34,000||85%||||15%|38.40|4,500|13.10|2.24|0.32|6,102|7,214', '239,200|40%|12%|||14%|23%|34.34|4,550|13.27|3.23|0.86|6,007|7,242'],
  ['September', '22,500|100%||||||34.10|4,500|13.17|2.22|0.32|6,100|7,224', '34,000||95%||||5%|34.00|4,500|13.17|2.22|0.32|6,100|7,224', '227,700|34%|20%|||24%|24%|34.83|4,550|13.58|3.00|0.73|6,018|7,246'],
  ['October', '22,500|100%||||||34.10|4,500|13.17|2.22|0.32|6,100|7,224', '34,000|91%|||||9%|34.00|4,500|13.17|2.22|0.32|6,100|7,224', '227,700|33%|24%|||14%|14%|34.84|4,550|13.49|3.08|0.74|6,018|7,246'],
  ['November', '22,500|100%||||||34.08|4,521|13.17|2.22|0.32|6,100|7,224', '34,000||67%||||33%|38.43|4,500|13.07|2.08|0.24|6,062|7,212', '227,700||40%|||24%|27%|33.74|4,550|13.37|3.74|0.86|5,986|7,144'],
  ['December', '75,000|100%||||||34.08|4,521|13.17|2.22|0.32|6,100|7,224', '60,900||73%||||27%|38.28|4,500|13.08|2.90|0.24|6,086|7,212', '133,270||33%|||48%|24%|33.61|4,550|13.48|3.48|0.61|6,034|7,144']
];
let html = colgroup(wMonth) +
  '<tr class="h"><th rowspan="2">Month</th><th class="two" rowspan="2">Tonnag<br>e (MT)</th><th colspan="6">Seam</th><th colspan="2">Received Basis (AR)</th><th colspan="4">Air Dry Basis (ADB)</th><th>DAF</th></tr>' +
  '<tr class="h sub">' + ['E1(2)','F','G','F Mont','H','I','TM (%wt)','CV (Kcal/Kg)','IM (%wt)','Ash (%wt)','TS (%wt)','CV (Kcal/Kg)','CV (Kcal/Kg)'].map(h => `<th>${h}</th>`).join('') + '</tr>';
months.forEach(([m, ...rows], k) => {
  html += `<tr class="m"><td class="l" colspan="15">${m}</td></tr>`;
  rows.forEach((r, i) => {
    html += '<tr>' + [products[i], ...r.split('|')].map((v, c) => {
      const cls = c === 0 ? 'l' : c > 1 && c < 12 && c !== 9 ? 'c' : '';
      return `<td class="${cls}${k === 6 && i === 1 && c === 9 ? ' sel' : ''}">${v}</td>`;
    }).join('') + '</tr>';
  });
});
$('tMonth').innerHTML = html;
size($('tMonth'), wMonth);

/* Totals by month */
const wTot = [24,24,15,24,23,19,16,17,25];
const actual = ['Jan|293,064|34.00|4,563|13.73|4.66|0.63|6,092|7,249', 'Feb|233,696|33.89|4,604|14.28|4.76|0.66|5,947|7,249', 'March|79,886|33.26|4,624|13.26|4.16|0.77|5,949|7,231', 'Apr|128,382|33.49|4,602|13.32|4.76|0.62|6,190|7,196'];
const forecast = ['May|233,900|34.04|4,415|13.65|4.61|0.57|5,773|7,236', 'June|279,000|34.42|4,523|13.88|3.61|0.65|5,967|7,201', 'July|285,400|33.90|4,528|13.49|4.04|0.63|5,926|7,101', 'Agt|242,500|34.80|4,546|13.20|3.43|0.83|5,900|7,097', 'Sept|285,000|34.03|4,546|13.44|2.99|0.64|6,034|7,242', 'Oct|285,000|34.04|4,546|13.43|2.99|0.63|6,036|7,242', 'Nov|285,000|34.94|4,542|13.31|3.89|0.85|5,969|7,098', 'Dec|269,270|34.99|4,533|13.28|3.28|0.46|6,002|7,202'];
html = colgroup(wTot) + '<tr class="sub">' + cells('Dates|Tonnage (MT)|TM|CV(Kcal/Kg)|IM(%wt)|Ash(%wt)|TS(%wt)|CV(Kcal)|CV(Kcal/Kg)', 9) + '</tr>';
actual.forEach(r => html += `<tr>${cells(r, 1)}</tr>`);
forecast.forEach(r => html += `<tr style="height:18px">${cells(r).replace('<td>', '<td class="c">')}</tr>`);
html += `<tr>${cells('Total|2,403,740|34.27|4,534|14|4.66|0.62|5,973|7,236', 1)}</tr>`;
$('tTotals').innerHTML = html;
size($('tTotals'), wTot);

/* Actual and forecast summary */
const wType = [19,12,25,19,23,22,19,18,23,24];
html = colgroup(wType) +
  '<tr class="h"><th rowspan="2">TYPE</th><th class="narrow" rowspan="2">Month</th><th class="narrow" rowspan="2">Tonnage (MT)</th><th colspan="2">Received Basis (AR)</th><th colspan="4">Air Dried Basis (ADB)</th><th>DAF</th></tr>' +
  '<tr class="h sub">' + ['TM (%wt)','CV (Kcal/Kg)','IM (%wt)','Ash (%wt)','TS (%wt)','CV (Kcal/Kg)','CV (Kcal/Kg)'].map(h => `<th>${h}</th>`).join('') + '</tr>';
[...actual, ...forecast].forEach((r, i) => {
  const cat = i === 0 ? '<td class="cat c" rowspan="4">ACTUAL</td>' : i === 4 ? '<td class="cat c" rowspan="8">FORECAST</td>' : '';
  html += `<tr>${cat}${cells(r, 1)}</tr>`;
});
html += '<tr class="bold"><td class="c" colspan="2">Product</td>' + cells('#######|####|4,535|13.69|4.06|0.62|5,973|7,236') + '</tr>';
html += '<tr class="bold"><td class="c" colspan="2">Target</td>' + cells('#######|&lt;36%|≥4500||&lt;6.5%|&lt;0.6%||') + '</tr>';
$('tType').innerHTML = html;
size($('tType'), wType);

/* Detail by product */
const wDet = [10,24,21,22,22,24,17,22,24,24,24,15,24,23,19,16,17,25,14,18,12,25,19,23,23];
const detail = [
  'May|112,000|26,300|95,000|34.12|33.44|33.96|4,274|4500|4550|5.04|5.03|5.16|0.88|0.84|0.84|7,185|7,242|7,322|13.74|###|13.41|5,595|5,606|5,683',
  'June|22,500|34,000|212,700|33.04|34.24|33.03|4,309|4500|4550|7.20|4.27|3.48|0.80|1.67|0.63|7,194|7,225|7,216|13.74|###|13.57|5,610|5,610|5,940',
  'July|22,500|35,200|227,700|33.04|34.24|33.79|4,309|4500|4550|7.20|4.60|4.07|0.80|0.37|0.80|7,194|7,504|7,244|13.74|###|13.40|5,610|5,927|5,948',
  'Agt|22,500|34,000|239,200|34.84|34.86|33.87|4,500|4500|4550|2.72|2.72|3.22|0.32|0.32|0.64|7,224|7,224|7,222|13.17|###|13.64|6,072|6,072|6,004',
  'Sept|22,500|34,000|227,700|34.80|34.80|33.92|4,500|4500|4550|2.72|2.72|3.28|0.32|0.32|0.72|7,224|7,224|7,214|13.17|###|13.50|6,072|6,072|6,006',
  'Oct|22,500|34,000|227,700|34.80|34.80|33.72|4,500|4500|4550|2.72|2.72|3.24|0.32|0.32|0.76|7,224|7,224|7,212|13.17|###|13.42|6,072|6,072|6,002',
  'Nov|22,500|34,000|227,700|38.28|38.28|33.43|4,521|4500|4550|2.72|2.72|3.61|0.32|0.32|0.80|7,224|7,224|7,146|13.17|###|13.27|6,072|6,072|5,963',
  'Dec|75,000|60,900|133,270|38.28|38.28|34.63|4,521|4500|4550|2.72|2.72|3.48|0.32|0.32|0.80|7,224|7,224|7,242|13.17|###|13.31|6,072|6,072|5,941'
];
html = colgroup(wDet) + '<tr><th rowspan="2">Date</th>' + ['Tonnage (MT)','TM','GAR','ASH','TS','CV DAF','IM','CV ADB'].map(h => `<th colspan="3">${h}</th>`).join('') + '</tr><tr class="sub">';
for (let i = 0; i < 8; i++) html += products.map(p => `<td class="l">${p}</td>`).join('');
html += '</tr>' + detail.map(r => `<tr>${cells(r, 1)}</tr>`).join('');
$('tDetail').innerHTML = html;
size($('tDetail'), wDet);

/* Forecast chart */
const chart = [['May',112800,26100,95000],['June',22500,34800,212700],['July',22500,35200,227700],['Agt',22500,34800,239200],['Sept',22500,34800,227700],['Oct',22500,34800,227700],['Nov',22500,34800,227700],['Dec',75000,60900,133270]];
const base = 75, scale = 49 / 239200;
let g = '<text class="ct" x="97" y="6">Forecast May - Dec</text><text class="cl" transform="translate(9 47) rotate(-90)">Tonnage (MT)</text><path d="M16 75h174" stroke="#ccc"/>';
chart.forEach(([m, ...v], k) => {
  const cx = 26 + k * 22 - k * 2 / 7;
  v.forEach((n, i) => {
    const x = cx + (i - 1) * 5.6, h = n * scale;
    g += `<rect class="s${i}" x="${x - 2}" y="${base - h}" width="4" height="${h}"/><text class="cv" transform="translate(${x + 1} ${base - h - 2}) rotate(-90)">${n.toLocaleString('en-US')}</text>`;
  });
  g += `<text class="cl" x="${cx}" y="80">${m}</text>`;
});
[['GAR 4400/4200', 68], ['GAR 4500', 94], ['GAR 4550', 113]].forEach(([t, x], i) => {
  g += `<rect class="s${i}" x="${x}" y="86" width="2" height="2"/><text class="cg" x="${x + 3}" y="88">${t}</text>`;
});
$('chart').innerHTML = g;
```
